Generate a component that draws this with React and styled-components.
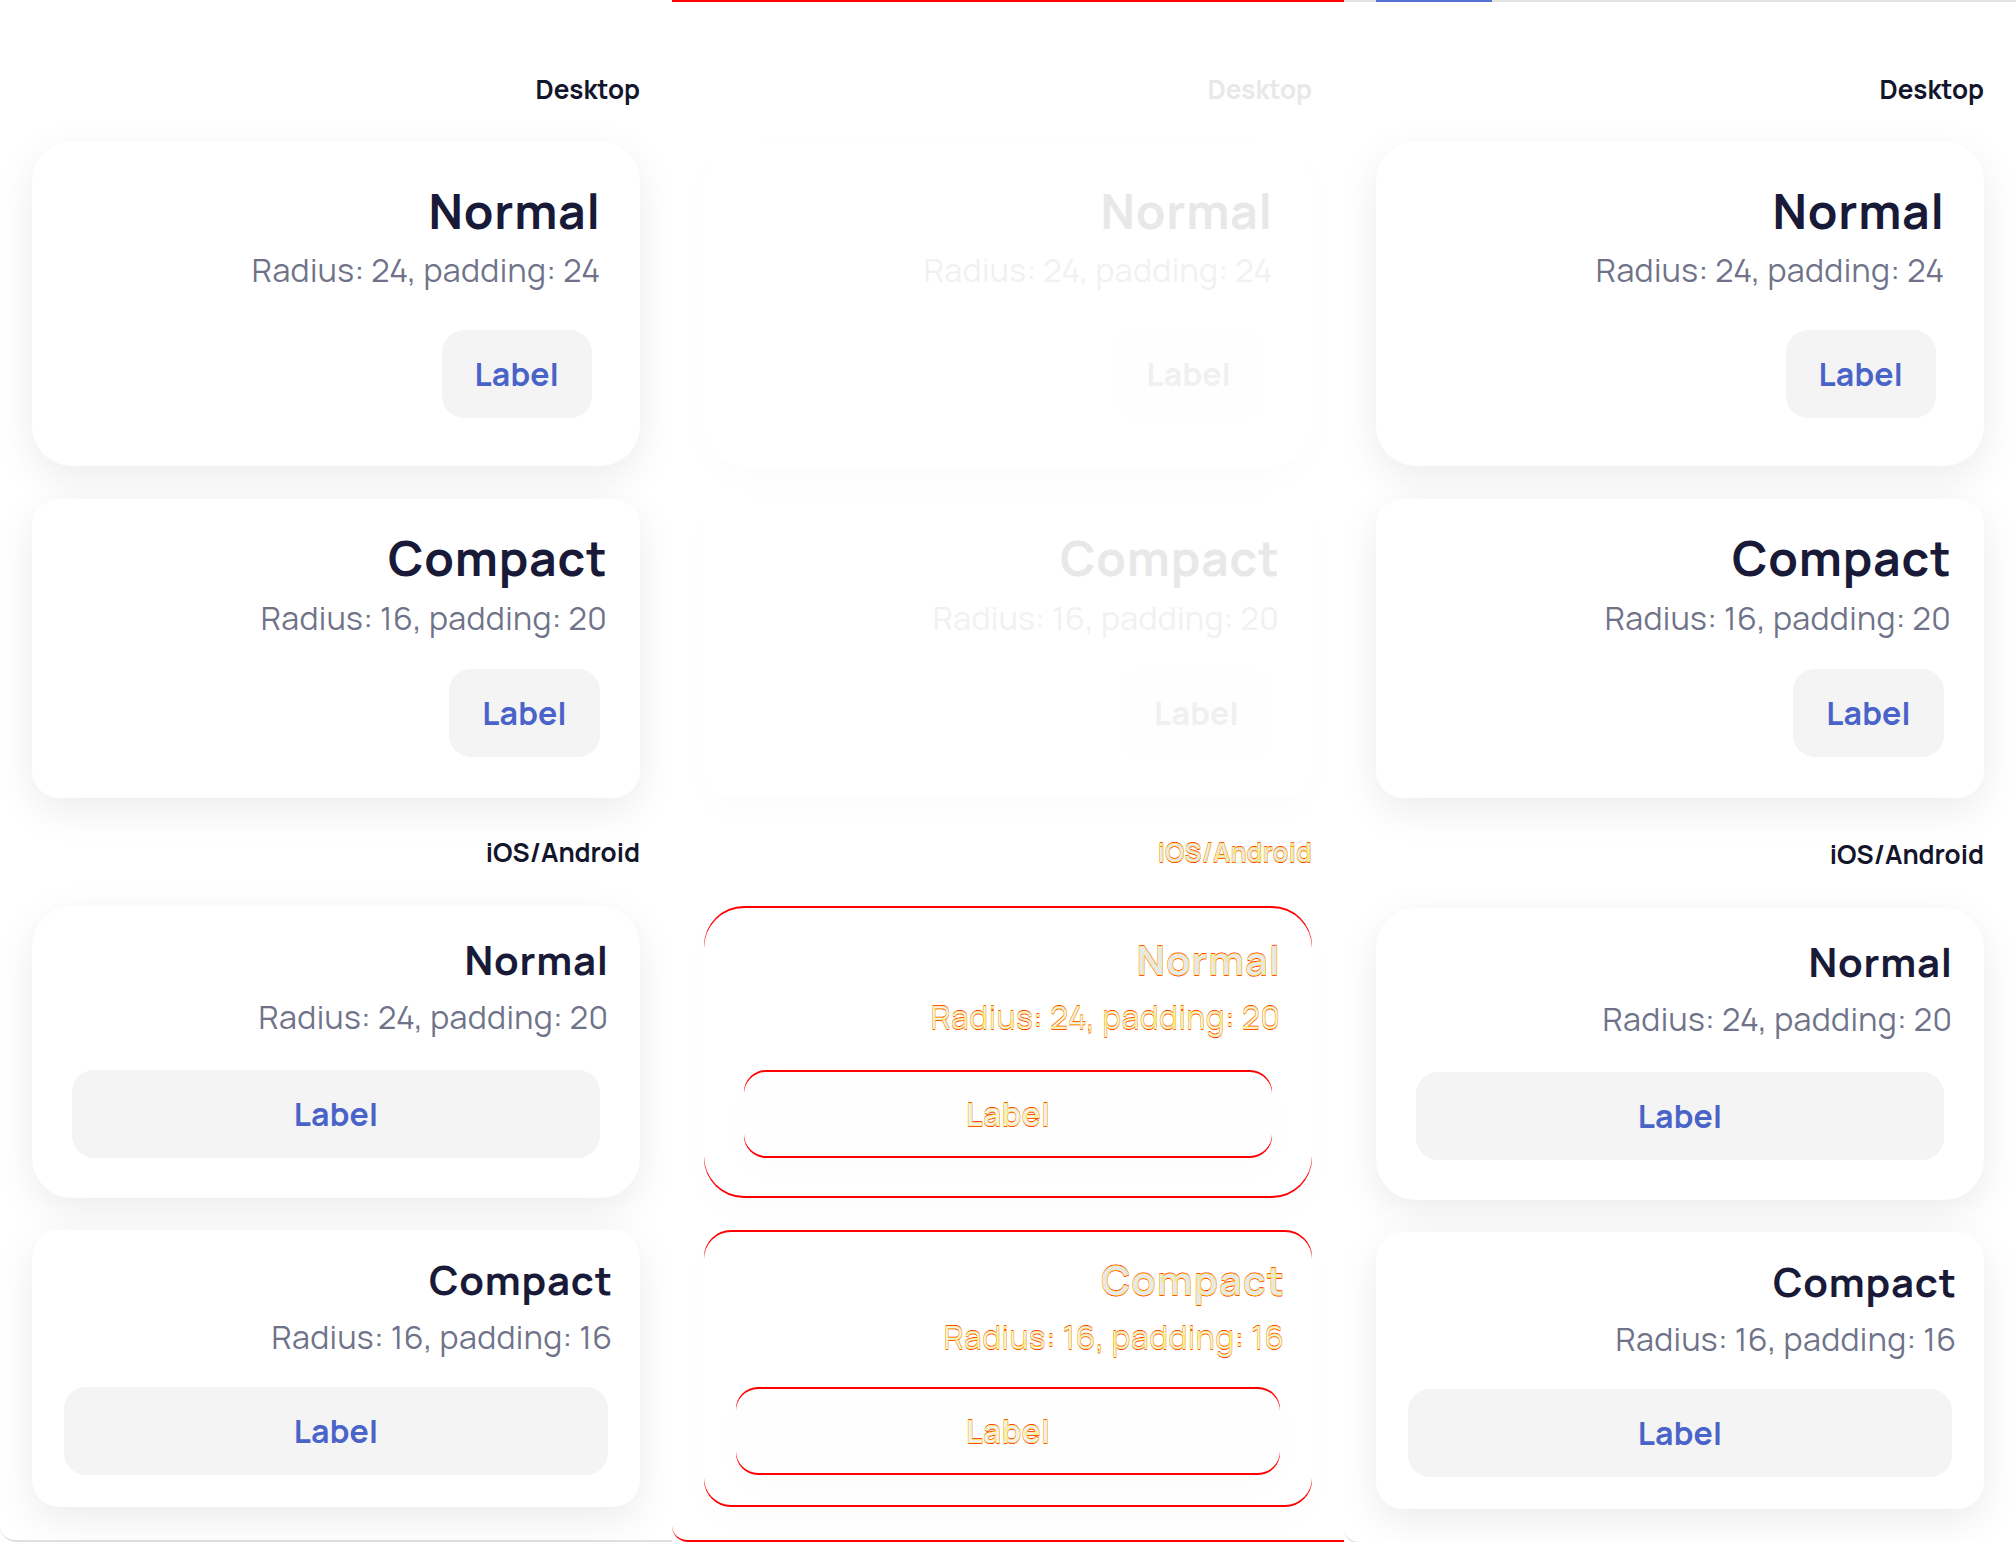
import React from 'react';
import styled, { createGlobalStyle, css } from 'styled-components';

const GlobalStyle = createGlobalStyle`
  *, *::before, *::after { box-sizing: border-box; }
  html, body { margin: 0; padding: 0; background: #ffffff; }
  body {
    width: 2016px;
    height: 1542px;
    overflow: hidden;
    font-family: Manrope, Inter, "Noto Sans", sans-serif;
    -webkit-font-smoothing: antialiased;
  }
`;

const palette = {
  base: {
    heading: '#13152b',
    title: '#181a38',
    sub: '#6f7389',
    label: '#4a63c8',
    btn: '#f4f4f4',
    shadow: '0 12px 40px rgba(0, 0, 0, 0.08)',
    frameBottom: '#e0e0e0',
  },
  faded: {
    heading: '#e8e8e8',
    title: '#e8e8e8',
    sub: '#f1f1f1',
    label: '#f0f0f0',
    btn: '#fefefe',
    shadow: '0 12px 40px rgba(0, 0, 0, 0.014)',
    frameBottom: '#fdfdfd',
  },
};
palette.diff = { ...palette.faded, frameBottom: '#ff0000' };

const tone = (key) => (p) => palette[p.$tone || 'base'][key];

const diffText = css`
  ${(p) =>
    p.$tone === 'diff' &&
    css`
      -webkit-text-stroke: 0.45px #ffe800;
      text-shadow: 0 1.2px 0 #ff1a00, 0 -1.2px 0 #ff1a00;
    `}
`;

const diffEdges = css`
  ${(p) =>
    p.$tone === 'diff' &&
    css`
      box-shadow: inset 0 2px 0 #ff0000, inset 0 -2px 0 #ff0000, ${tone('shadow')};
    `}
`;

const Comparison = styled.main`
  display: grid;
  grid-template-columns: repeat(3, 672px);
  height: 1542px;
  overflow: hidden;
`;

const Panel = styled.section`
  display: flex;
  flex-direction: column;
  height: 1542px;
  overflow: hidden;
  background: #ffffff;
`;

const TopBar = styled.div`
  flex: none;
  display: flex;
  height: 2px;
  background: ${(p) =>
    p.$variant === 'diff' ? '#ff0000' : p.$variant === 'current' ? '#e4e4e4' : 'transparent'};
`;

const TopBarIndicator = styled.span`
  margin-left: 32px;
  width: 116px;
  height: 100%;
  background: #5670d3;
`;

const Frame = styled.div`
  flex: none;
  display: flex;
  flex-direction: column;
  padding: 71px 32px 32.7px 32px;
  border-bottom: 2px solid ${(p) => palette[p.$tone].frameBottom};
  border-bottom-left-radius: 16px;
`;

const Section = styled.div`
  display: flex;
  flex-direction: column;
  margin-top: ${(p) => p.$offset || 0}px;
`;

const Heading = styled.h2`
  margin: 0 0 ${(p) => p.$after}px;
  font-size: 26px;
  line-height: 32px;
  font-weight: 700;
  text-align: right;
  color: ${tone('heading')};
  ${diffText}
`;

const CardStack = styled.div`
  display: flex;
  flex-direction: column;
  gap: ${(p) => p.$gap}px;
`;

const Card = styled.article`
  display: flex;
  flex-direction: column;
  padding: ${(p) => p.$padTop}px ${(p) => p.$pad}px ${(p) => p.$pad}px;
  border-radius: ${(p) => p.$radius}px;
  background: #ffffff;
  box-shadow: ${tone('shadow')};
  text-align: right;
  ${diffEdges}
`;

const Title = styled.h3`
  margin: 0 -0.8px 0 0;
  font-size: ${(p) => p.$size}px;
  line-height: ${(p) => p.$lh}px;
  font-weight: 700;
  letter-spacing: 0.8px;
  color: ${tone('title')};
  ${diffText}
`;

const Subtitle = styled.p`
  margin: ${(p) => p.$gap}px -0.4px 0 0;
  font-size: 32px;
  line-height: 40px;
  font-weight: 400;
  letter-spacing: 0.4px;
  color: ${tone('sub')};
  ${diffText}
`;

const Button = styled.button`
  display: flex;
  align-items: center;
  justify-content: center;
  height: 88px;
  margin: ${(p) => p.$gap}px ${(p) => p.$m}px ${(p) => p.$m}px;
  padding: 0 33px;
  align-self: ${(p) => (p.$full ? 'stretch' : 'flex-end')};
  border: none;
  border-radius: 22px;
  background: ${tone('btn')};
  font-family: inherit;
  font-size: 32px;
  font-weight: 700;
  letter-spacing: 0.2px;
  color: ${tone('label')};
  ${diffEdges}
`;

const ButtonText = styled.span`
  ${diffText}
`;

const groups = [
  {
    heading: 'Desktop',
    headingAfter: 37,
    gap: 33,
    cards: [
      { title: 'Normal', sub: 'Radius: 24, padding: 24', padTop: 40, pad: 40, radius: 40, size: 48, lh: 58, subGap: 10, btnGap: 40, m: 8, full: false },
      { title: 'Compact', sub: 'Radius: 16, padding: 20', padTop: 30, pad: 33.3, radius: 27, size: 48, lh: 58, subGap: 10.5, btnGap: 31.8, m: 7, full: false },
    ],
  },
  {
    heading: 'iOS/Android',
    headingAfter: 37.7,
    gap: 32.3,
    cards: [
      { title: 'Normal', sub: 'Radius: 24, padding: 20', padTop: 31.5, pad: 32, radius: 40, size: 40, lh: 46, subGap: 14, btnGap: 32.3, m: 8, full: true },
      { title: 'Compact', sub: 'Radius: 16, padding: 16', padTop: 27.5, pad: 28, radius: 27, size: 40, lh: 46, subGap: 14, btnGap: 29.7, m: 4, full: true },
    ],
  },
];

function DemoCard({ card, t }) {
  return (
    <Card $padTop={card.padTop} $pad={card.pad} $radius={card.radius} $tone={t}>
      <Title $size={card.size} $lh={card.lh} $tone={t}>{card.title}</Title>
      <Subtitle $gap={card.subGap} $tone={t}>{card.sub}</Subtitle>
      <Button $gap={card.btnGap} $m={card.m} $full={card.full} $tone={t}>
        <ButtonText $tone={t}>Label</ButtonText>
      </Button>
    </Card>
  );
}

function Screen({ variant }) {
  const tones = variant === 'diff' ? ['faded', 'diff'] : ['base', 'base'];
  const frameTone = variant === 'diff' ? 'diff' : 'base';
  const mobileOffset = variant === 'current' ? 40.6 : 38.6;
  return (
    <Panel>
      <TopBar $variant={variant}>
        {variant === 'current' && <TopBarIndicator />}
      </TopBar>
      <Frame $tone={frameTone}>
        {groups.map((g, i) => (
          <Section key={g.heading} $offset={i === 0 ? 0 : mobileOffset}>
            <Heading $after={g.headingAfter} $tone={tones[i]}>{g.heading}</Heading>
            <CardStack $gap={g.gap}>
              {g.cards.map((c) => (
                <DemoCard key={c.title} card={c} t={tones[i]} />
              ))}
            </CardStack>
          </Section>
        ))}
      </Frame>
    </Panel>
  );
}

export default function App() {
  return (
    <>
      <GlobalStyle />
      <Comparison>
        <Screen variant="baseline" />
        <Screen variant="diff" />
        <Screen variant="current" />
      </Comparison>
    </>
  );
}
